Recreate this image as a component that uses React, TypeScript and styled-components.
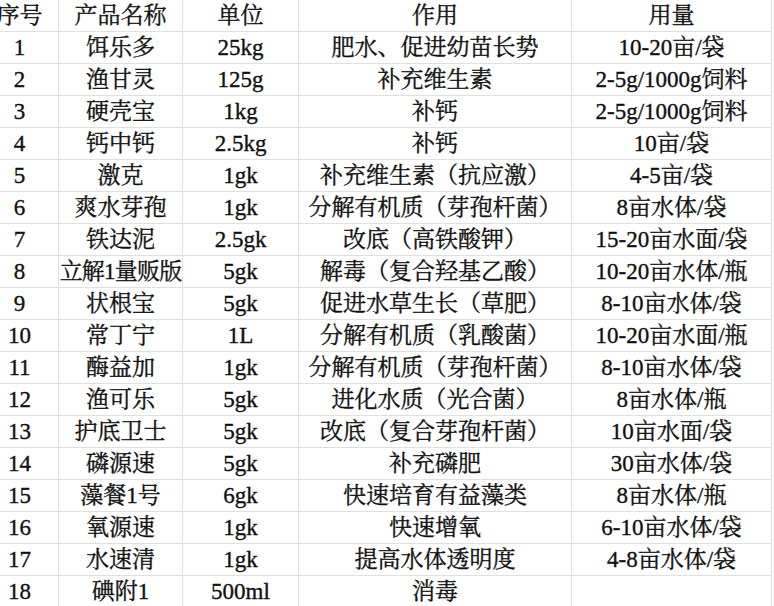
import styled, { createGlobalStyle } from 'styled-components';

type Product = {
  no: string;
  name: string;
  unit: string;
  use: string;
  dose: string;
};

const products: Product[] = [
  { no: '1', name: '饵乐多', unit: '25kg', use: '肥水、促进幼苗长势', dose: '10-20亩/袋' },
  { no: '2', name: '渔甘灵', unit: '125g', use: '补充维生素', dose: '2-5g/1000g饲料' },
  { no: '3', name: '硬壳宝', unit: '1kg', use: '补钙', dose: '2-5g/1000g饲料' },
  { no: '4', name: '钙中钙', unit: '2.5kg', use: '补钙', dose: '10亩/袋' },
  { no: '5', name: '激克', unit: '1gk', use: '补充维生素（抗应激）', dose: '4-5亩/袋' },
  { no: '6', name: '爽水芽孢', unit: '1gk', use: '分解有机质（芽孢杆菌）', dose: '8亩水体/袋' },
  { no: '7', name: '铁达泥', unit: '2.5gk', use: '改底（高铁酸钾）', dose: '15-20亩水面/袋' },
  { no: '8', name: '立解1量贩版', unit: '5gk', use: '解毒（复合羟基乙酸）', dose: '10-20亩水体/瓶' },
  { no: '9', name: '状根宝', unit: '5gk', use: '促进水草生长（草肥）', dose: '8-10亩水体/袋' },
  { no: '10', name: '常丁宁', unit: '1L', use: '分解有机质（乳酸菌）', dose: '10-20亩水面/瓶' },
  { no: '11', name: '酶益加', unit: '1gk', use: '分解有机质（芽孢杆菌）', dose: '8-10亩水体/袋' },
  { no: '12', name: '渔可乐', unit: '5gk', use: '进化水质（光合菌）', dose: '8亩水体/瓶' },
  { no: '13', name: '护底卫士', unit: '5gk', use: '改底（复合芽孢杆菌）', dose: '10亩水面/袋' },
  { no: '14', name: '磷源速', unit: '5gk', use: '补充磷肥', dose: '30亩水体/袋' },
  { no: '15', name: '藻餐1号', unit: '6gk', use: '快速培育有益藻类', dose: '8亩水体/瓶' },
  { no: '16', name: '氧源速', unit: '1gk', use: '快速增氧', dose: '6-10亩水体/袋' },
  { no: '17', name: '水速清', unit: '1gk', use: '提高水体透明度', dose: '4-8亩水体/袋' },
  { no: '18', name: '碘附1', unit: '500ml', use: '消毒', dose: '' },
];

const App = () => {
  return (
    <>
      <GlobalStyle />
      <Sheet>
        <Row>
          <Cell>序号</Cell>
          <Cell>产品名称</Cell>
          <Cell>单位</Cell>
          <Cell>作用</Cell>
          <Cell>用量</Cell>
        </Row>
        {products.map((p) => (
          <Row key={p.no}>
            <Cell>{p.no}</Cell>
            <Cell $tight={p.name.length > 5}>{p.name}</Cell>
            <Cell>{p.unit}</Cell>
            <Cell>{p.use}</Cell>
            <Cell>{p.dose}</Cell>
          </Row>
        ))}
      </Sheet>
    </>
  );
};

const GlobalStyle = createGlobalStyle`
  body {
    margin: 0;
    background: #ffffff;
    overflow: hidden;
  }
`;

// first column is partly scrolled off the left edge, as in the screenshot
const Sheet = styled.div`
  display: flex;
  flex-direction: column;
  margin-left: -19px;
  width: 792px;
  font-family: 'Liberation Serif', 'Noto Serif CJK SC', 'Noto Sans CJK SC', serif;
  font-size: 23px;
  color: #111111;
  -webkit-text-stroke: 0.35px #111111;
`;

const Row = styled.div`
  display: grid;
  grid-template-columns: 78px 124px 116px 273px 200px;
  height: 32px;
`;

const Cell = styled.div<{ $tight?: boolean }>`
  display: flex;
  align-items: center;
  justify-content: center;
  border-right: 1px solid #e0e0e0;
  border-bottom: 1px solid #e0e0e0;
  white-space: nowrap;
  line-height: 1;
  letter-spacing: ${({ $tight }) => ($tight ? '-0.8px' : 'normal')};
`;

export default App;
